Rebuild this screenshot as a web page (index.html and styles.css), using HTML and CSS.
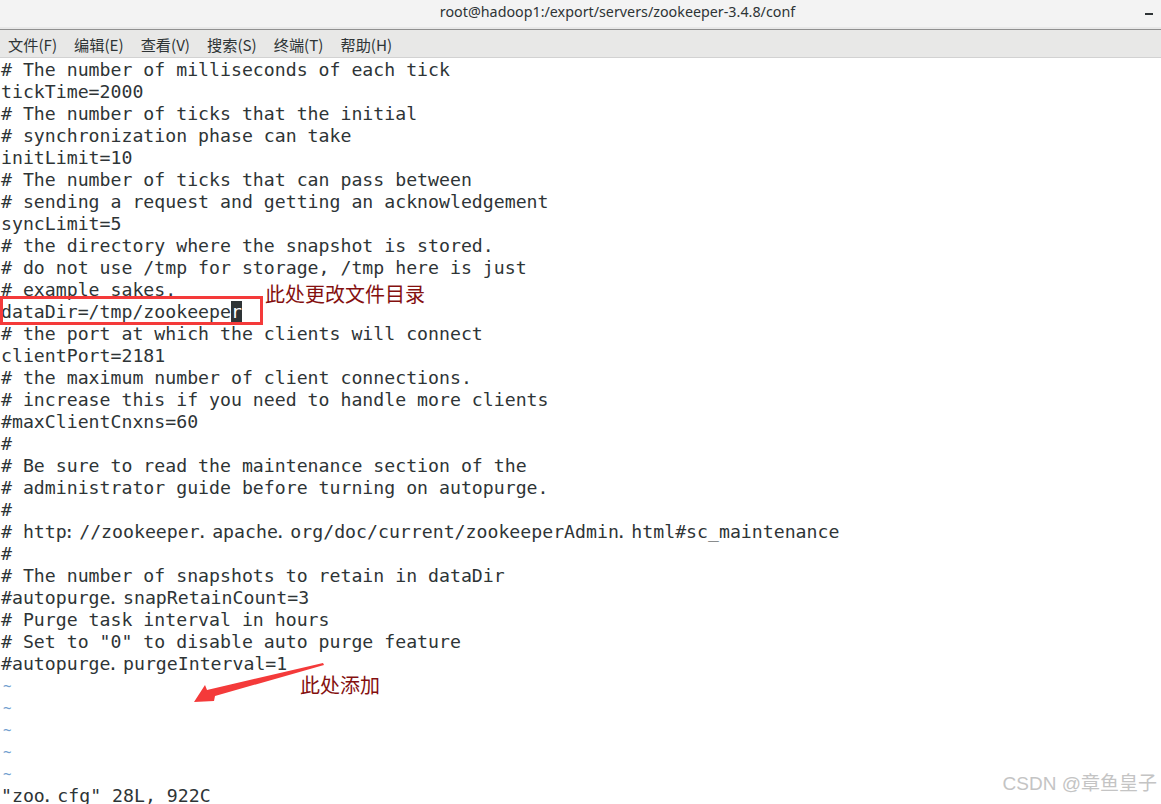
FILE: index.html
```html
<!DOCTYPE html>
<html lang="zh-CN">
<head>
    <meta charset="UTF-8">
    <title>zoo.cfg</title>
    <link rel="stylesheet" href="styles.css">
</head>
<body>
    <div class="window">
        <!-- Title bar -->
        <header class="titlebar">
            <span class="title">root@hadoop1:/export/servers/zookeeper-3.4.8/conf</span>
            <span class="minimize"></span>
        </header>

        <!-- Menu -->
        <nav class="menubar">
            <span>文件(F)</span>
            <span>编辑(E)</span>
            <span>查看(V)</span>
            <span>搜索(S)</span>
            <span>终端(T)</span>
            <span>帮助(H)</span>
        </nav>

        <!-- Terminal (vim) -->
        <main class="terminal">
            <div class="line"># The number of milliseconds of each tick</div>
            <div class="line">tickTime=2000</div>
            <div class="line"># The number of ticks that the initial</div>
            <div class="line"># synchronization phase can take</div>
            <div class="line">initLimit=10</div>
            <div class="line"># The number of ticks that can pass between</div>
            <div class="line"># sending a request and getting an acknowledgement</div>
            <div class="line">syncLimit=5</div>
            <div class="line"># the directory where the snapshot is stored.</div>
            <div class="line"># do not use /tmp for storage, /tmp here is just</div>
            <div class="line"># example sakes.</div>
            <div class="line">dataDir=/tmp/zookeepe<span class="cursor">r</span></div>
            <div class="line"># the port at which the clients will connect</div>
            <div class="line">clientPort=2181</div>
            <div class="line"># the maximum number of client connections.</div>
            <div class="line"># increase this if you need to handle more clients</div>
            <div class="line">#maxClientCnxns=60</div>
            <div class="line">#</div>
            <div class="line"># Be sure to read the maintenance section of the</div>
            <div class="line"># administrator guide before turning on autopurge.</div>
            <div class="line">#</div>
            <div class="line"># http<span class="np">: </span>//zookeeper<span class="np">. </span>apache<span class="np">. </span>org/doc/current/zookeeperAdmin<span class="np">. </span>html#sc_maintenance</div>
            <div class="line">#</div>
            <div class="line"># The number of snapshots to retain in dataDir</div>
            <div class="line">#autopurge<span class="np">. </span>snapRetainCount=3</div>
            <div class="line"># Purge task interval in hours</div>
            <div class="line"># Set to "0" to disable auto purge feature</div>
            <div class="line">#autopurge<span class="np">. </span>purgeInterval=1</div>
            <div class="line tilde">~</div>
            <div class="line tilde">~</div>
            <div class="line tilde">~</div>
            <div class="line tilde">~</div>
            <div class="line tilde">~</div>
            <div class="line">"zoo<span class="np">. </span>cfg" 28L, 922C</div>
        </main>

        <!-- Annotations drawn over the screenshot -->
        <div class="mark-box"></div>
        <div class="note note-dir">此处更改文件目录</div>
        <div class="note note-add">此处添加</div>
        <svg class="arrow" width="140" height="50" viewBox="0 0 140 50">
            <polygon points="132,2 133,4 24,35 23,40 3,41 14,24 16,29" fill="#f43a3a"/>
        </svg>
        <div class="watermark">CSDN @章鱼皇子</div>
    </div>
</body>
</html>
```

FILE: styles.css
```css
/* General */
html, body {
    margin: 0;
    padding: 0;
    height: 100%;
    overflow: hidden;
    background: #fff;
}

.window {
    position: relative;
    width: 1161px;
    height: 804px;
    overflow: hidden;
}

/* Title bar */
.titlebar {
    height: 27px;
    background: #f3f3f3;
    border-bottom: 2px solid #e8e8e8;
    display: flex;
    justify-content: center;
    align-items: center;
    position: relative;
}

.titlebar .title {
    font-family: "Noto Sans", "Open Sans", sans-serif;
    font-size: 14.3px;
    color: #2e3436;
    line-height: 24px;
    margin-top: -4px;
    margin-left: 74px;
}

.titlebar .minimize {
    position: absolute;
    right: 8px;
    top: 13px;
    width: 8px;
    height: 2px;
    background: #2e3436;
}

/* Menu bar */
.menubar {
    height: 27px;
    background: #e8e8e7;
    border-top: 1px solid #8f8f8f;
    border-bottom: 1px solid #d2d2d2;
    display: flex;
    align-items: center;
    gap: 17px;
    padding-left: 8px;
    font-family: "Noto Sans CJK SC", "Noto Sans", sans-serif;
    font-size: 15.2px;
    color: #2e3436;
}

.menubar span {
    line-height: 27px;
    padding-top: 1px;
}

/* Terminal */
.terminal {
    font-family: "DejaVu Sans Mono", "Liberation Mono", monospace;
    font-size: 18.2px;
    line-height: 22px;
    color: #2e3436;
    padding-left: 1px;
    padding-top: 1px;
}

.line {
    height: 22px;
    white-space: pre;
}

/* period / colon shown narrow, with a gap after it */
.np {
    margin-left: -3px;
    letter-spacing: -3.2px;
}

.cursor {
    background: #2e3436;
    color: #fff;
}

.tilde {
    color: #729fcf;
    font-size: 14px;
    padding-left: 2px;
}

/* Annotations */
.mark-box {
    position: absolute;
    left: 0;
    top: 296px;
    width: 257px;
    height: 23px;
    border: 3px solid #f43a3a;
}

.note {
    position: absolute;
    font-family: "Noto Sans CJK SC", sans-serif;
    font-size: 20px;
    line-height: 24px;
    color: #84100f;
}

.note-dir {
    left: 265px;
    top: 282px;
}

.note-add {
    left: 300px;
    top: 673px;
}

.arrow {
    position: absolute;
    left: 191px;
    top: 661px;
}

.watermark {
    position: absolute;
    right: 4px;
    bottom: 9px;
    font-family: "Liberation Sans", "Noto Sans CJK SC", sans-serif;
    font-size: 19px;
    color: #c4c4c4;
}
```
